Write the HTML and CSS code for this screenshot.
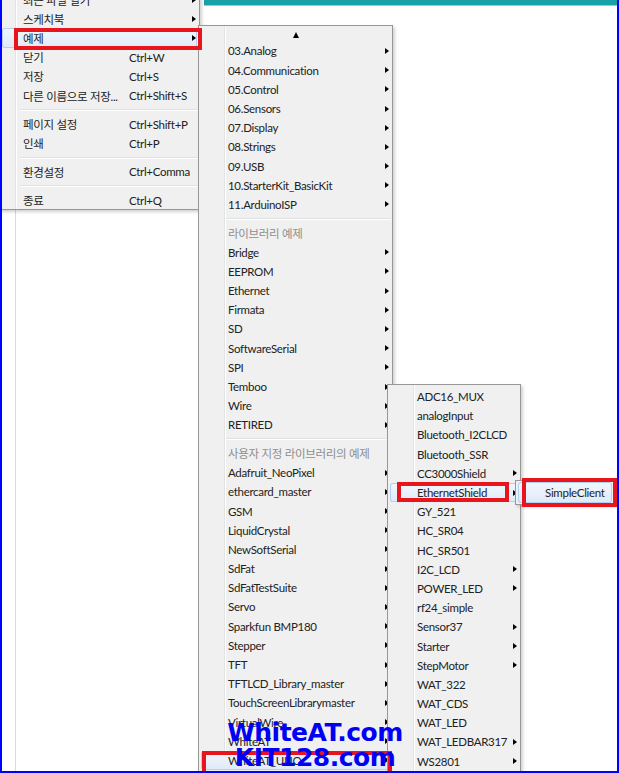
FILE: index.html
```html
<!DOCTYPE html>
<html>
<head>
<meta charset="utf-8">
<title>예제 메뉴</title>
<link rel="stylesheet" href="styles.css">
</head>
<body>
    <div class="screen">
        <!-- editor window behind the menus -->
        <div class="band"></div>

        <!-- 파일 menu -->
        <div class="menu menu-file">
            <div class="item sub"><span class="label">최근 파일 열기</span></div>
            <div class="item sub"><span class="label">스케치북</span></div>
            <div class="item sub hot"><span class="label">예제</span></div>
            <div class="item"><span class="label">닫기</span><span class="key">Ctrl+W</span></div>
            <div class="item"><span class="label">저장</span><span class="key">Ctrl+S</span></div>
            <div class="item"><span class="label">다른 이름으로 저장...</span><span class="key">Ctrl+Shift+S</span></div>
            <div class="sep"></div>
            <div class="item"><span class="label">페이지 설정</span><span class="key">Ctrl+Shift+P</span></div>
            <div class="item"><span class="label">인쇄</span><span class="key">Ctrl+P</span></div>
            <div class="sep"></div>
            <div class="item"><span class="label">환경설정</span><span class="key">Ctrl+Comma</span></div>
            <div class="sep"></div>
            <div class="item"><span class="label">종료</span><span class="key">Ctrl+Q</span></div>
        </div>

        <!-- 예제 submenu -->
        <div class="menu menu-examples">
            <div class="scroll-up"></div>
            <div class="item sub">03.Analog</div>
            <div class="item sub">04.Communication</div>
            <div class="item sub">05.Control</div>
            <div class="item sub">06.Sensors</div>
            <div class="item sub">07.Display</div>
            <div class="item sub">08.Strings</div>
            <div class="item sub">09.USB</div>
            <div class="item sub">10.StarterKit_BasicKit</div>
            <div class="item sub">11.ArduinoISP</div>
            <div class="sep"></div>
            <div class="item head">라이브러리 예제</div>
            <div class="item sub">Bridge</div>
            <div class="item sub">EEPROM</div>
            <div class="item sub">Ethernet</div>
            <div class="item sub">Firmata</div>
            <div class="item sub">SD</div>
            <div class="item sub">SoftwareSerial</div>
            <div class="item sub">SPI</div>
            <div class="item sub">Temboo</div>
            <div class="item sub">Wire</div>
            <div class="item sub">RETIRED</div>
            <div class="sep"></div>
            <div class="item head">사용자 지정 라이브러리의 예제</div>
            <div class="item sub">Adafruit_NeoPixel</div>
            <div class="item sub">ethercard_master</div>
            <div class="item sub">GSM</div>
            <div class="item sub">LiquidCrystal</div>
            <div class="item sub">NewSoftSerial</div>
            <div class="item sub">SdFat</div>
            <div class="item sub">SdFatTestSuite</div>
            <div class="item sub">Servo</div>
            <div class="item sub">Sparkfun BMP180</div>
            <div class="item sub">Stepper</div>
            <div class="item sub">TFT</div>
            <div class="item sub">TFTLCD_Library_master</div>
            <div class="item sub">TouchScreenLibrarymaster</div>
            <div class="item sub">VirtualWire</div>
            <div class="item sub">WhiteAT</div>
            <div class="item sub hot">WhiteAT_UNO</div>
        </div>

        <!-- WhiteAT_UNO submenu -->
        <div class="menu menu-uno">
            <div class="item">ADC16_MUX</div>
            <div class="item">analogInput</div>
            <div class="item">Bluetooth_I2CLCD</div>
            <div class="item">Bluetooth_SSR</div>
            <div class="item sub">CC3000Shield</div>
            <div class="item sub hot">EthernetShield</div>
            <div class="item">GY_521</div>
            <div class="item">HC_SR04</div>
            <div class="item">HC_SR501</div>
            <div class="item sub">I2C_LCD</div>
            <div class="item sub">POWER_LED</div>
            <div class="item">rf24_simple</div>
            <div class="item sub">Sensor37</div>
            <div class="item sub">Starter</div>
            <div class="item sub">StepMotor</div>
            <div class="item">WAT_322</div>
            <div class="item">WAT_CDS</div>
            <div class="item">WAT_LED</div>
            <div class="item sub">WAT_LEDBAR317</div>
            <div class="item sub">WS2801</div>
        </div>

        <!-- EthernetShield submenu -->
        <div class="menu menu-eth">
            <div class="item hot">SimpleClient</div>
        </div>

        <!-- red boxes drawn on the capture -->
        <div class="mark mark-file"></div>
        <div class="mark mark-eth"></div>
        <div class="mark mark-client"></div>
        <div class="mark mark-uno"></div>

        <div class="watermark">
            <div>WhiteAT.com</div>
            <div>KIT128.com</div>
        </div>

        <div class="frame"></div>
    </div>
</body>
</html>
```

FILE: styles.css
```css
* {
    margin: 0;
    padding: 0;
    box-sizing: border-box;
}

body {
    width: 619px;
    height: 773px;
    overflow: hidden;
    background: #fff;
    font-family: Lato, "Noto Sans CJK KR", sans-serif;
    font-size: 11.5px;
    letter-spacing: -0.3px;
    color: #222;
}

.screen {
    position: relative;
    width: 619px;
    height: 773px;
    overflow: hidden;
    /* line number gutter of the editor */
    background: linear-gradient(to right, transparent 15px, #d9d9d9 15px, #d9d9d9 16px, transparent 16px), #fff;
}

.band {
    height: 6px;
    margin-left: 204px;
    background: #17a2a7;
    border-bottom: 1px solid #8fd0d2;
}

/* ---------- menus ---------- */

.menu {
    position: absolute;
    background: linear-gradient(to right, transparent 25px, #e2e3e3 25px, #e2e3e3 26px, #fff 26px, #fff 27px, transparent 27px), #f0f0f0;
    border: 1px solid #979797;
    box-shadow: 2px 2px 3px rgba(0, 0, 0, 0.18);
}

.item {
    display: flex;
    align-items: center;
    height: 19.2px;
    padding-left: 29px;
    white-space: nowrap;
}

.item.sub::after {
    content: "";
    margin-left: auto;
    margin-right: 3px;
    border-left: 4px solid #000;
    border-top: 3.5px solid transparent;
    border-bottom: 3.5px solid transparent;
}

.item.head {
    color: #8e8e8e;
}

.item.hot {
    margin: 0 2px;
    padding-left: 27px;
    border-radius: 3px;
    background: linear-gradient(#f2f7fd, #dfeaf8);
    box-shadow: inset 0 0 0 1px #b3cff1;
}

.item.hot.sub::after {
    margin-right: 1px;
}

.sep {
    height: 0;
    margin: 3.7px 1px 3.7px 27px;
    border-top: 1px solid #e0e0e0;
    border-bottom: 1px solid #fff;
}

.menu-file {
    left: -1px;
    top: -11px;
    width: 201px;
    height: 221px;
    background: linear-gradient(to right, transparent 15px, #e2e3e3 15px, #e2e3e3 16px, #fff 16px, #fff 17px, transparent 17px), #f0f0f0;
}

.menu-file .item {
    padding-left: 23px;
}

.menu-file .item.hot {
    padding-left: 21px;
}

.menu-file .label {
    width: 106px;
}

.menu-file .sep {
    margin-left: 20px;
}

.menu-examples {
    left: 198px;
    top: 25px;
    width: 195px;
    height: 800px;
    padding-top: 2px;
}

.scroll-up {
    height: 13.4px;
    display: flex;
    justify-content: center;
    align-items: center;
}

.scroll-up::before {
    content: "";
    border-bottom: 6px solid #000;
    border-left: 3.5px solid transparent;
    border-right: 3.5px solid transparent;
}

.menu-uno {
    left: 387px;
    top: 384px;
    width: 134px;
    height: 420px;
    padding-top: 2px;
}

.menu-eth {
    left: 515px;
    top: 480px;
    width: 100px;
    height: 25px;
    padding-top: 1px;
}

.menu-eth .item.hot {
    height: 21px;
}

/* ---------- overlays ---------- */

.mark {
    position: absolute;
    border: 4px solid #e8151c;
}

.mark-file {
    left: 14px;
    top: 28px;
    width: 188px;
    height: 22px;
}

.mark-eth {
    left: 397px;
    top: 482px;
    width: 112px;
    height: 20px;
}

.mark-client {
    left: 522px;
    top: 478px;
    width: 95px;
    height: 29px;
}

.mark-uno {
    left: 202px;
    top: 751px;
    width: 190px;
    height: 26px;
}

.watermark {
    position: absolute;
    left: 222px;
    top: 720px;
    width: 186px;
    text-align: center;
    font-family: "DejaVu Sans", sans-serif;
    font-weight: bold;
    font-size: 25px;
    line-height: 25px;
    letter-spacing: -0.5px;
    color: #0000f5;
}

.frame {
    position: absolute;
    inset: 0;
    border: 2px solid #0000ff;
    border-top: 0;
}
```
